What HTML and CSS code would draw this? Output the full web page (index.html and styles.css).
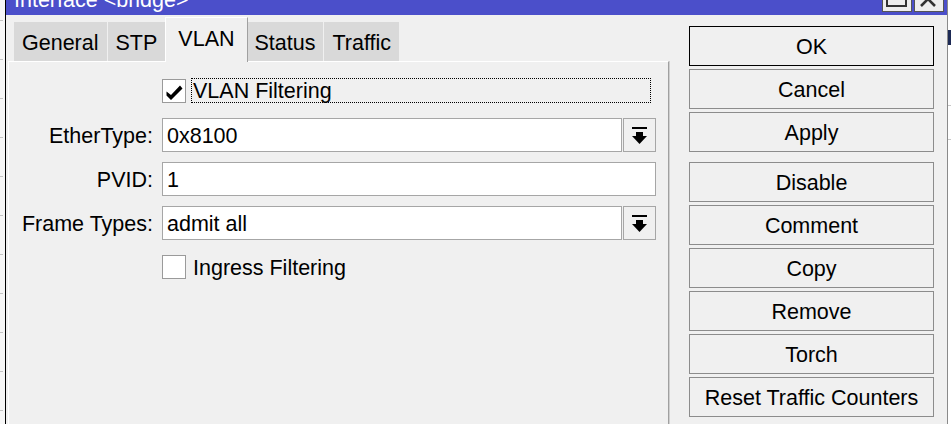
FILE: index.html
```html
<!DOCTYPE html>
<html>
<head>
<meta charset="utf-8">
<title>Interface &lt;bridge&gt;</title>
<link rel="stylesheet" href="styles.css">
</head>
<body>
<div class="screen">
  <div class="edge-left"></div>
  <div class="window">
    <div class="titlebar">
      <span class="title">Interface &lt;bridge&gt;</span>
      <div class="controls">
        <span class="ctl"><svg width="28" height="11" viewBox="0 0 28 11"><path d="M4 -2 V6 H23 V-2" fill="none" stroke="#333" stroke-width="2"/></svg></span>
        <span class="ctl"><svg width="28" height="11" viewBox="0 0 28 11"><path d="M6 6 L13 -1 L20 6" fill="none" stroke="#333" stroke-width="2.6"/></svg></span>
      </div>
    </div>
    <div class="body">
      <div class="left">
        <div class="tabs">
          <div class="tab">General</div>
          <div class="tab">STP</div>
          <div class="tab active">VLAN</div>
          <div class="tab">Status</div>
          <div class="tab">Traffic</div>
        </div>
        <div class="panel">
          <div class="form">
            <div class="row row-check row-first">
              <span class="label"></span>
              <div class="field">
                <span class="box"><svg width="22" height="22" viewBox="0 0 22 22"><path d="M3.5 11.5 L8 15 L17 5.5 L19.5 8.5 L8 20 L3.5 15.5 Z" fill="#000"/></svg></span>
                <span class="check-label focused">VLAN Filtering</span>
              </div>
            </div>
            <div class="row">
              <span class="label">EtherType:</span>
              <div class="field">
                <div class="input">0x8100</div>
                <div class="drop"><svg width="15" height="17" viewBox="0 0 15 17"><rect x="0" y="0" width="15" height="2" fill="#000"/><rect x="4" y="5" width="7" height="4" fill="#000"/><polygon points="0,9 15,9 7.5,17" fill="#000"/></svg></div>
              </div>
            </div>
            <div class="row">
              <span class="label">PVID:</span>
              <div class="field">
                <div class="input">1</div>
              </div>
            </div>
            <div class="row">
              <span class="label">Frame Types:</span>
              <div class="field">
                <div class="input">admit all</div>
                <div class="drop"><svg width="15" height="17" viewBox="0 0 15 17"><rect x="0" y="0" width="15" height="2" fill="#000"/><rect x="4" y="5" width="7" height="4" fill="#000"/><polygon points="0,9 15,9 7.5,17" fill="#000"/></svg></div>
              </div>
            </div>
            <div class="row row-check row-last">
              <span class="label"></span>
              <div class="field">
                <span class="box"></span>
                <span class="check-label">Ingress Filtering</span>
              </div>
            </div>
          </div>
        </div>
      </div>
      <div class="actions">
        <button class="btn btn-default">OK</button>
        <button class="btn">Cancel</button>
        <button class="btn group-end">Apply</button>
        <button class="btn">Disable</button>
        <button class="btn">Comment</button>
        <button class="btn">Copy</button>
        <button class="btn">Remove</button>
        <button class="btn">Torch</button>
        <button class="btn">Reset Traffic Counters</button>
      </div>
    </div>
  </div>
  <div class="edge-right"></div>
</div>
</body>
</html>
```

FILE: styles.css
```css
* { box-sizing: border-box; }
html, body { margin: 0; padding: 0; }
body {
  width: 951px;
  height: 424px;
  overflow: hidden;
  background: #f7f7f7;
  font-family: "Liberation Sans", Arial, sans-serif;
  font-size: 21.5px;
  color: #000;
}
.screen { display: flex; height: 424px; }
.edge-left {
  width: 5px;
  background-image: repeating-linear-gradient(to bottom, transparent 0 20px, #c4c4c4 20px 21px, transparent 21px 39px);
  background-size: 3px 100%;
  background-repeat: no-repeat;
}
.edge-right {
  width: 3px;
  background: linear-gradient(to bottom, #ffffff 0 30px, #1d2a55 30px 45px, #ffffff 45px 105px, #c8c8c8 105px 106px, #ffffff 106px 139px, #c8c8c8 139px 140px, #ffffff 140px);
}
.window {
  flex: 1;
  display: flex;
  flex-direction: column;
  background: #f0f0f0;
  border-left: 1px solid #000;
  border-right: 1px solid #8a8a8a;
}
.titlebar {
  height: 15px;
  flex: none;
  background: #4b4fca;
  color: #fff;
  display: flex;
  justify-content: space-between;
  align-items: flex-start;
  overflow: hidden;
}
.title {
  padding-left: 8px;
  line-height: 24px;
  margin-top: -12px;
  white-space: nowrap;
}
.controls { display: flex; gap: 2px; margin-right: 3px; }
.ctl {
  display: block;
  width: 30px;
  height: 12px;
  background: #eeeeee;
  border: 1px solid #555;
  border-top: none;
}
.ctl svg { display: block; }

.body { flex: 1; display: flex; min-height: 0; }
.left {
  width: 663px;
  flex: none;
  padding-left: 2px;
  display: flex;
  flex-direction: column;
}
.tabs {
  display: flex;
  align-items: flex-end;
  height: 46px;
  padding: 2px 0 0 6px;
  flex: none;
}
.tab {
  height: 39px;
  padding: 9px 8px 0;
  line-height: 24px;
  background: #d9d9d9;
  margin-right: 1px;
  white-space: nowrap;
}
.tab.active {
  position: relative;
  z-index: 1;
  height: 45px;
  margin: 0 -1px -1px -1px;
  padding: 9px 12px 0;
  background: #f0f0f0;
  border-top: 1px solid #fff;
  border-left: 1px solid #fff;
  border-right: 1px solid #a0a0a0;
}
.panel {
  flex: 1;
  background: #f0f0f0;
  border-top: 1px solid #fff;
  border-left: 1px solid #fff;
  border-right: 1px solid #a0a0a0;
  box-shadow: 1px 0 0 #cfcfcf;
}
.form {
  display: flex;
  flex-direction: column;
  gap: 10px;
  padding: 16px 12px 0 0;
}
.row {
  display: flex;
  align-items: center;
  gap: 9px;
  height: 34px;
}
.row-check { height: 25px; }
.row-first { margin-bottom: 5px; }
.row-last { margin-top: 5px; height: 24px; }
.label {
  width: 144px;
  flex: none;
  text-align: right;
  white-space: nowrap;
  line-height: 24px;
  padding-top: 2px;
}
.field {
  flex: 1;
  display: flex;
  align-items: center;
  gap: 1px;
  height: 100%;
}
.input {
  flex: 1;
  height: 100%;
  background: #fff;
  border: 1px solid #a6a6a6;
  padding: 1px 0 0 4px;
  line-height: 32px;
  white-space: nowrap;
}
.drop {
  width: 33px;
  height: 100%;
  flex: none;
  background: #f0f0f0;
  border: 1px solid #a6a6a6;
  display: flex;
  align-items: center;
  justify-content: center;
}
.drop svg { display: block; }
.box {
  width: 24px;
  height: 24px;
  flex: none;
  background: #fff;
  border: 1px solid #9a9a9a;
  align-self: flex-end;
  margin-right: 4px;
}
.box svg { display: block; }
.check-label {
  flex: 1;
  height: 25px;
  border: 1px dotted transparent;
  padding-left: 1px;
  line-height: 25px;
  margin-right: 5px;
  white-space: nowrap;
}
.row-last .check-label { height: 24px; line-height: 24px; }
.check-label.focused { border-color: #000; }

.actions {
  width: 245px;
  flex: none;
  margin-left: 20px;
  padding-top: 11px;
  display: flex;
  flex-direction: column;
  gap: 3px;
}
.btn {
  height: 40px;
  padding: 2px 0 0;
  margin: 0;
  border: 1px solid #8c8c8c;
  background: #f0f0f0;
  font-family: inherit;
  font-size: 21.5px;
  color: #000;
  line-height: 36px;
  text-align: center;
  white-space: nowrap;
  border-radius: 0;
}
.btn-default { border-color: #000; }
.group-end { margin-bottom: 7px; }
```
